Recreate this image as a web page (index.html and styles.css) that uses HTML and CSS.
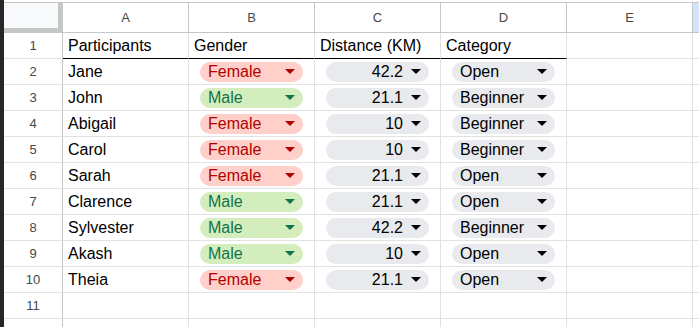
FILE: index.html
```html
<!DOCTYPE html>
<html>
<head>
<meta charset="utf-8">
<link rel="stylesheet" href="styles.css">
</head>
<body>
<div class="app">
  <div class="edge"></div>
  <div class="sheet">
    <div class="grid">
      <div class="corner"></div>
      <div class="ch">A</div>
      <div class="ch">B</div>
      <div class="ch">C</div>
      <div class="ch">D</div>
      <div class="ch">E</div>
      <div class="ch sel"></div>

      <div class="rh">1</div>
      <div class="c head">Participants</div>
      <div class="c head">Gender</div>
      <div class="c head">Distance (KM)</div>
      <div class="c head">Category</div>
      <div class="c"></div>
      <div class="c last"></div>

      <div class="rh">2</div>
      <div class="c">Jane</div>
      <div class="c chipcell"><span class="chip f"><span class="t">Female</span><span class="arr"></span></span></div>
      <div class="c chipcell"><span class="chip g num"><span class="t">42.2</span><span class="arr"></span></span></div>
      <div class="c chipcell"><span class="chip g"><span class="t">Open</span><span class="arr"></span></span></div>
      <div class="c"></div>
      <div class="c last"></div>

      <div class="rh">3</div>
      <div class="c">John</div>
      <div class="c chipcell"><span class="chip m"><span class="t">Male</span><span class="arr"></span></span></div>
      <div class="c chipcell"><span class="chip g num"><span class="t">21.1</span><span class="arr"></span></span></div>
      <div class="c chipcell"><span class="chip g"><span class="t">Beginner</span><span class="arr"></span></span></div>
      <div class="c"></div>
      <div class="c last"></div>

      <div class="rh">4</div>
      <div class="c">Abigail</div>
      <div class="c chipcell"><span class="chip f"><span class="t">Female</span><span class="arr"></span></span></div>
      <div class="c chipcell"><span class="chip g num"><span class="t">10</span><span class="arr"></span></span></div>
      <div class="c chipcell"><span class="chip g"><span class="t">Beginner</span><span class="arr"></span></span></div>
      <div class="c"></div>
      <div class="c last"></div>

      <div class="rh">5</div>
      <div class="c">Carol</div>
      <div class="c chipcell"><span class="chip f"><span class="t">Female</span><span class="arr"></span></span></div>
      <div class="c chipcell"><span class="chip g num"><span class="t">10</span><span class="arr"></span></span></div>
      <div class="c chipcell"><span class="chip g"><span class="t">Beginner</span><span class="arr"></span></span></div>
      <div class="c"></div>
      <div class="c last"></div>

      <div class="rh">6</div>
      <div class="c">Sarah</div>
      <div class="c chipcell"><span class="chip f"><span class="t">Female</span><span class="arr"></span></span></div>
      <div class="c chipcell"><span class="chip g num"><span class="t">21.1</span><span class="arr"></span></span></div>
      <div class="c chipcell"><span class="chip g"><span class="t">Open</span><span class="arr"></span></span></div>
      <div class="c"></div>
      <div class="c last"></div>

      <div class="rh">7</div>
      <div class="c">Clarence</div>
      <div class="c chipcell"><span class="chip m"><span class="t">Male</span><span class="arr"></span></span></div>
      <div class="c chipcell"><span class="chip g num"><span class="t">21.1</span><span class="arr"></span></span></div>
      <div class="c chipcell"><span class="chip g"><span class="t">Open</span><span class="arr"></span></span></div>
      <div class="c"></div>
      <div class="c last"></div>

      <div class="rh">8</div>
      <div class="c">Sylvester</div>
      <div class="c chipcell"><span class="chip m"><span class="t">Male</span><span class="arr"></span></span></div>
      <div class="c chipcell"><span class="chip g num"><span class="t">42.2</span><span class="arr"></span></span></div>
      <div class="c chipcell"><span class="chip g"><span class="t">Beginner</span><span class="arr"></span></span></div>
      <div class="c"></div>
      <div class="c last"></div>

      <div class="rh">9</div>
      <div class="c">Akash</div>
      <div class="c chipcell"><span class="chip m"><span class="t">Male</span><span class="arr"></span></span></div>
      <div class="c chipcell"><span class="chip g num"><span class="t">10</span><span class="arr"></span></span></div>
      <div class="c chipcell"><span class="chip g"><span class="t">Open</span><span class="arr"></span></span></div>
      <div class="c"></div>
      <div class="c last"></div>

      <div class="rh">10</div>
      <div class="c">Theia</div>
      <div class="c chipcell"><span class="chip f"><span class="t">Female</span><span class="arr"></span></span></div>
      <div class="c chipcell"><span class="chip g num"><span class="t">21.1</span><span class="arr"></span></span></div>
      <div class="c chipcell"><span class="chip g"><span class="t">Open</span><span class="arr"></span></span></div>
      <div class="c"></div>
      <div class="c last"></div>

      <div class="rh">11</div>
      <div class="c"></div>
      <div class="c"></div>
      <div class="c"></div>
      <div class="c"></div>
      <div class="c"></div>
      <div class="c last"></div>

      <div class="rh">12</div>
      <div class="c"></div>
      <div class="c"></div>
      <div class="c"></div>
      <div class="c"></div>
      <div class="c"></div>
      <div class="c last"></div>
    </div>
  </div>
</div>
</body>
</html>
```

FILE: styles.css
```css
* { box-sizing: border-box; }
html, body { margin: 0; padding: 0; background: #fff; }
body { font-family: "Liberation Sans", Arial, sans-serif; overflow: hidden; }

.app {
  display: flex;
  width: 699px;
  height: 327px;
  overflow: hidden;
}
.edge {
  width: 4px;
  flex: none;
  background: #27272b;
}
.sheet {
  flex: 1;
  padding-top: 2px;
}
.grid {
  display: grid;
  grid-template-columns: 59px repeat(5, 126px) 1fr;
  grid-auto-rows: 26px;
  grid-template-rows: 30px;
  border-top: 1px solid #c4c7c5;
}

.corner {
  background: #f8f9fa;
  border-right: 5px solid #c4c7c5;
  border-bottom: 5px solid #c4c7c5;
}
.ch {
  display: flex;
  align-items: center;
  justify-content: center;
  font-size: 13px;
  color: #444746;
  background: #fff;
  border-right: 1px solid #c4c7c5;
  border-bottom: 1px solid #c4c7c5;
}
.ch.sel {
  background: #d3e3fd;
  border-right: none;
}
.rh {
  display: flex;
  align-items: center;
  justify-content: center;
  font-size: 13px;
  color: #444746;
  border-right: 1px solid #c4c7c5;
  border-bottom: 1px solid #e1e3e1;
}
.c {
  display: flex;
  align-items: center;
  padding: 1px 4px 0 5px;
  font-size: 16px;
  color: #000;
  border-right: 1px solid #e1e3e1;
  border-bottom: 1px solid #e1e3e1;
  white-space: nowrap;
  overflow: hidden;
}
.c.last { border-right: none; }
.c.head { border-bottom-color: #000; }

.c.chipcell { padding: 0 11px; }
.chip {
  display: flex;
  align-items: center;
  width: 100%;
  height: 20px;
  border-radius: 10px;
  padding: 1px 8px 0 8px;
  font-size: 16px;
}
.chip .t { flex: 1; }
.chip.num .t { text-align: right; margin-right: 8px; }
.chip .arr {
  width: 0;
  height: 0;
  border-left: 5px solid transparent;
  border-right: 5px solid transparent;
  border-top: 5px solid currentColor;
  margin-top: -1px;
}
.chip.f { background: #ffcfc9; color: #b10202; }
.chip.m { background: #d4edbc; color: #11734b; }
.chip.g { background: #e8eaed; color: #000; }
.chip.g .arr { border-top-color: #000; }
```
